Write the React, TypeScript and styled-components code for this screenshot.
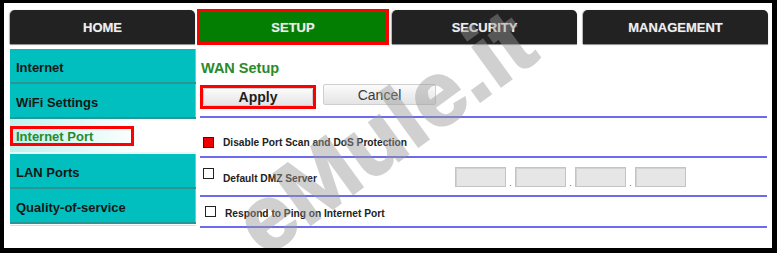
import React from "react";
import styled, { createGlobalStyle } from "styled-components";

const GlobalStyle = createGlobalStyle`
    html, body {
        margin: 0;
        padding: 0;
        background: #ffffff;
    }
    * {
        box-sizing: border-box;
    }
`;

const Frame = styled.div`
    position: relative;
    width: 777px;
    height: 253px;
    overflow: hidden;
    background: #ffffff;
    border-style: solid;
    border-color: #000000;
    border-width: 3px 5px 5px 4px;
    padding: 7px 4px 0 6px;
    font-family: "Liberation Sans", Arial, sans-serif;
`;

const TabBar = styled.div`
    display: grid;
    grid-template-columns: repeat(4, 185px);
    column-gap: 6px;
    height: 34px;
`;

const Tab = styled.div<{ $active?: boolean }>`
    display: flex;
    align-items: center;
    justify-content: center;
    font-size: 13px;
    font-weight: 700;
    color: #eeeeee;
    text-shadow: 0 0 1px rgba(255, 255, 255, 0.4);
    background: ${p => (p.$active ? "#037e03" : "#222222")};
    border-radius: ${p => (p.$active ? "0" : "5px 5px 0 0")};
    border: ${p => (p.$active ? "3px solid #ff0000" : "none")};
    margin: ${p => (p.$active ? "-1px -3px -1px -4px" : "0")};
    box-shadow: ${p => (p.$active ? "none" : "0 1px 1px #8a8a8a, -1px 0 1px #b5b5b5")};
    padding-top: 1px;
`;

const Body = styled.div`
    display: grid;
    grid-template-columns: 186px 1fr;
    column-gap: 4px;
    margin-top: 5px;
`;

const Sidebar = styled.div`
    display: flex;
    flex-direction: column;
    align-self: start;
    border-bottom: 1px solid #dddddd;
    padding-bottom: 1px;
`;

const NavItem = styled.div<{ $current?: boolean }>`
    display: flex;
    align-items: center;
    height: 35px;
    padding: 3px 0 0 6px;
    font-size: 13px;
    font-weight: 700;
    color: ${p => (p.$current ? "#2a8a2a" : "#161616")};
    background: ${p => (p.$current ? "linear-gradient(to right, #bff0ee, #ffffff 70%)" : "#02bfbf")};
    border-bottom: 2px solid ${p => (p.$current ? "#e8f7f7" : "#2a9595")};
    box-shadow: inset -1px 0 0 rgba(255, 255, 255, 0.35);
`;

const NavBox = styled.span`
    display: flex;
    align-items: center;
    width: 124px;
    height: 20px;
    margin: -2px 0 0 -6px;
    padding-left: 3px;
    border: 3px solid #ff0000;
`;

const Content = styled.div`
    display: flex;
    flex-direction: column;
`;

const Title = styled.div`
    display: flex;
    align-items: center;
    height: 36px;
    padding: 1px 0 0 1px;
    font-size: 14.5px;
    font-weight: 700;
    color: #2a8a2a;
`;

const ButtonRow = styled.div`
    display: flex;
    align-items: flex-start;
    padding-bottom: 7px;
    border-bottom: 2px solid #6b6bee;
    margin-right: 1px;
`;

const RedBox = styled.div`
    border: 3px solid #ff0000;
    padding: 0;
    margin-right: 7px;
`;

const Button = styled.button<{ $primary?: boolean }>`
    display: flex;
    align-items: center;
    justify-content: center;
    width: ${p => (p.$primary ? "110px" : "113px")};
    height: ${p => (p.$primary ? "18px" : "21px")};
    margin-top: ${p => (p.$primary ? "0" : "-1px")};
    padding: 0;
    font-family: "Liberation Sans", Arial, sans-serif;
    font-size: 14px;
    font-weight: ${p => (p.$primary ? 700 : 400)};
    color: ${p => (p.$primary ? "#1e1e1e" : "#3a3a3a")};
    background: linear-gradient(#fbfbfb, #e4e4e4);
    border: 1px solid #cfcfcf;
    border-radius: 2px;
`;

const OptionRow = styled.div<{ $h: number; $pt: number }>`
    display: flex;
    align-items: center;
    height: ${p => p.$h}px;
    padding: ${p => p.$pt}px 0 0 3px;
    border-bottom: 2px solid #6b6bee;
    margin-right: 1px;
`;

const Check = styled.span<{ $checked?: boolean; $dx?: number; $dy?: number }>`
    width: 11px;
    height: 11px;
    flex: none;
    border: 1px solid #222222;
    background: ${p => (p.$checked ? "#ee0000" : "#ffffff")};
    margin-left: ${p => p.$dx || 0}px;
    margin-top: ${p => p.$dy || 0}px;
`;

const Label = styled.span<{ $dx?: number; $dy?: number }>`
    width: ${p => 232 - (p.$dx || 0)}px;
    margin-left: 9px;
    margin-top: ${p => p.$dy || 0}px;
    font-size: 10.2px;
    font-weight: 700;
    color: #222222;
    white-space: nowrap;
`;

const IpGroup = styled.div`
    display: flex;
    align-items: flex-end;
`;

const IpField = styled.span`
    width: 51px;
    height: 20px;
    background: #e6e6e6;
    border: 1px solid #c4c4c4;
    box-shadow: inset 1px 1px 0 #d2d2d2;
`;

const IpDot = styled.span`
    width: 9px;
    text-align: center;
    font-size: 9px;
    line-height: 8px;
    color: #6a6a9a;
`;

const Watermark = styled.div`
    position: absolute;
    left: 380px;
    top: 129px;
    transform: translate(-50%, -50%) rotate(-36deg);
    font-family: "Liberation Sans", Arial, sans-serif;
    font-size: 92px;
    font-weight: 700;
    line-height: 1;
    color: #999999;
    -webkit-text-stroke: 2px #999999;
    opacity: 0.45;
    white-space: nowrap;
    pointer-events: none;
`;

const tabs = ["HOME", "SETUP", "SECURITY", "MANAGEMENT"];
const menu = ["Internet", "WiFi Settings", "Internet Port", "LAN Ports", "Quality-of-service"];

export default function App() {
    return (
        <>
            <GlobalStyle />
            <Frame>
                <TabBar>
                    {tabs.map(t => (
                        <Tab key={t} $active={t === "SETUP"}>{t}</Tab>
                    ))}
                </TabBar>
                <Body>
                    <Sidebar>
                        {menu.map(m =>
                            m === "Internet Port" ? (
                                <NavItem key={m} $current>
                                    <NavBox>{m}</NavBox>
                                </NavItem>
                            ) : (
                                <NavItem key={m}>{m}</NavItem>
                            )
                        )}
                    </Sidebar>
                    <Content>
                        <Title>WAN Setup</Title>
                        <ButtonRow>
                            <RedBox>
                                <Button $primary>Apply</Button>
                            </RedBox>
                            <Button>Cancel</Button>
                        </ButtonRow>
                        <OptionRow $h={40} $pt={10}>
                            <Check $checked />
                            <Label>Disable Port Scan and DoS Protection</Label>
                        </OptionRow>
                        <OptionRow $h={39} $pt={0}>
                            <Check $dy={-6} />
                            <Label $dy={3}>Default DMZ Server</Label>
                            <IpGroup>
                                <IpField />
                                <IpDot>.</IpDot>
                                <IpField />
                                <IpDot>.</IpDot>
                                <IpField />
                                <IpDot>.</IpDot>
                                <IpField />
                            </IpGroup>
                        </OptionRow>
                        <OptionRow $h={31} $pt={1}>
                            <Check $dx={2} $dy={-2} />
                            <Label $dx={2} $dy={2}>Respond to Ping on Internet Port</Label>
                        </OptionRow>
                    </Content>
                </Body>
                <Watermark>eMule.it</Watermark>
            </Frame>
        </>
    );
}
